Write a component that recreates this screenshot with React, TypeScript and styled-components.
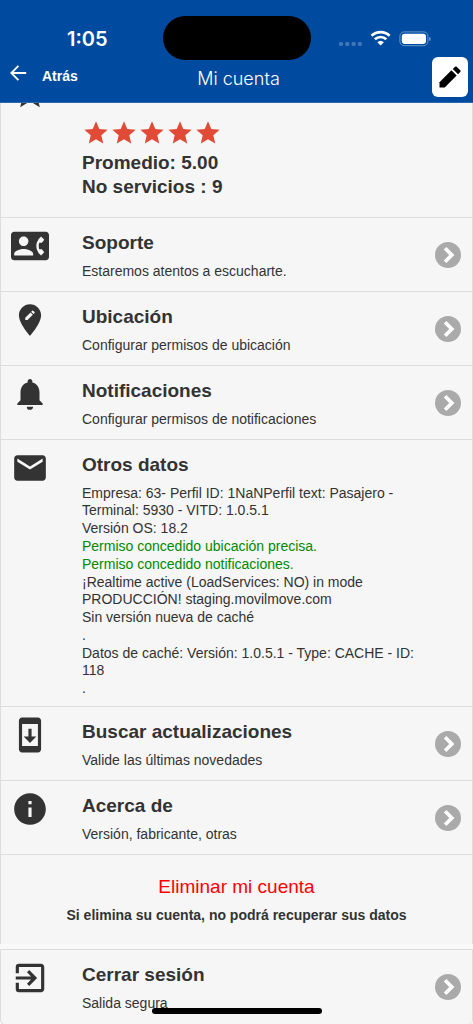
import React from "react";
import styled, { createGlobalStyle } from "styled-components";
import type { IconType } from "react-icons";
import {
  MdContactPhone,
  MdEditLocation,
  MdEmail,
  MdExitToApp,
  MdInfo,
  MdNotifications,
  MdStar,
  MdSystemUpdate,
} from "react-icons/md";

const GlobalStyle = createGlobalStyle`
  * { box-sizing: border-box; }
  body {
    margin: 0;
    background: #f9f9f9;
    color: #333;
    font-family: "Liberation Sans", Arial, sans-serif;
    font-size: 14px;
    line-height: 17px;
  }
  h1, h2, p { margin: 0; }
  button { font-family: inherit; border: 0; cursor: pointer; }
`;

const Header = styled.header`
  position: sticky;
  top: 0;
  z-index: 2;
  background: #004b9f;
  color: #fff;
  border-bottom: 1px solid #2a68ae;
`;

const StatusBar = styled.div`
  position: relative;
  display: flex;
  justify-content: space-between;
  align-items: center;
  height: 57px;
  padding: 20px 42px 0 67px;
`;

const Clock = styled.time`
  font-family: Inter, sans-serif;
  font-size: 20px;
  font-weight: 600;
  line-height: 24px;
`;

const Island = styled.div`
  position: absolute;
  top: 16px;
  left: 50%;
  width: 148px;
  height: 44px;
  border-radius: 22px;
  background: #000;
  transform: translateX(-50%);
`;

const Toolbar = styled.div`
  display: grid;
  grid-template-columns: 1fr auto 1fr;
  align-items: start;
  height: 45px;
  padding: 0 5px 0 9px;
`;

const BackButton = styled.button`
  display: flex;
  align-items: center;
  justify-self: start;
  gap: 15px;
  padding: 7px 0 0;
  background: none;
  color: #fff;
  font-size: 14px;
  font-weight: 700;
  line-height: 24px;
  svg { margin-bottom: 6px; }
`;

const PageTitle = styled.h1`
  padding-top: 10px;
  font-family: Inter, "Liberation Sans", sans-serif;
  font-size: 18px;
  font-weight: 300;
  line-height: 24px;
`;

const EditButton = styled.button`
  display: flex;
  align-items: center;
  justify-content: center;
  justify-self: end;
  width: 36px;
  height: 40px;
  padding: 0;
  border-radius: 6px;
  background: #fff;
  color: #000;
`;

const Panel = styled.section<{ $last?: boolean }>`
  border: 1px solid #ddd;
  border-bottom-width: ${(p) => (p.$last ? "1px" : "0")};
  border-radius: ${(p) => (p.$last ? "0 0 5px 5px" : "0")};
  background: #f6f6f6;
`;

const Main = styled.main`
  display: flex;
  flex-direction: column;
  gap: 5px;
  margin-top: -39px;
`;

const Row = styled.div`
  display: flex;
  align-items: flex-start;
  min-height: 74px;
  padding: 9px 11px 9px 10px;
  color: inherit;
  text-decoration: none;
  & + & { border-top: 1px solid #ddd; }
`;

const IconCell = styled.span`
  display: flex;
  flex: 0 0 38px;
  margin-right: 33px;
`;

const Body = styled.div`
  flex: 1;
  min-width: 0;
  padding: 4px 34px 0 0;
`;

const RowTitle = styled.h2`
  margin-bottom: 8px;
  font-size: 19px;
  font-weight: 700;
  line-height: 24px;
`;

const Chevron = styled.svg`
  flex: none;
  align-self: center;
  width: 26px;
  height: 26px;
`;

const Details = styled.div`
  display: flex;
  flex-direction: column;
  gap: 1px;
`;

const Granted = styled.p`
  color: #008a00;
`;

const Rating = styled.div`
  flex: 1;
  padding: 45px 0 9px;
  font-size: 19px;
  font-weight: 700;
  line-height: 24px;
`;

const Stars = styled.div`
  display: flex;
  margin-bottom: 4px;
  color: #e04a36;
`;

const DeleteBlock = styled.div`
  display: flex;
  flex-direction: column;
  align-items: center;
  gap: 8px;
  padding: 20px 10px;
  border-top: 1px solid #ddd;
  text-align: center;
`;

const DeleteButton = styled.button`
  padding: 0;
  background: none;
  color: #f00;
  font-size: 19px;
  line-height: 24px;
`;

const Warning = styled.p`
  font-weight: 700;
`;

const HomeIndicator = styled.div`
  position: fixed;
  z-index: 3;
  bottom: 10px;
  left: 50%;
  width: 170px;
  height: 6px;
  border-radius: 3px;
  background: #000;
  transform: translateX(-50%);
`;

function StatusIcons() {
  return (
    <svg width="92" height="18" viewBox="0 0 92 18" aria-hidden="true">
      <g fill="#3f77b8">
        <rect x="0" y="12" width="4" height="4" rx="1.4" />
        <rect x="6.3" y="12" width="4" height="4" rx="1.4" />
        <rect x="12.6" y="12" width="4" height="4" rx="1.4" />
        <rect x="18.9" y="12" width="4" height="4" rx="1.4" />
      </g>
      <g fill="none" stroke="#fff" strokeWidth="2.7">
        <path d="M32.6 5.8a13 13 0 0 1 18 0" />
        <path d="M35.9 9.3a8.2 8.2 0 0 1 11.4 0" />
      </g>
      <path d="M38.3 12.2a4.8 4.8 0 0 1 6.6 0l-3.3 3.3z" fill="#fff" />
      <rect x="60.9" y="1.9" width="28" height="13.8" rx="4.3" fill="none" stroke="#6b98ca" />
      <rect x="62.8" y="3.7" width="24.2" height="10.2" rx="2.8" fill="#fff" />
      <path d="M90.1 6.7a2.3 2.3 0 0 1 0 4.4z" fill="#6b98ca" />
    </svg>
  );
}

function BackArrow() {
  return (
    <svg width="18" height="18" viewBox="0 0 18 18" fill="none" stroke="#fff" strokeWidth="1.8" aria-hidden="true">
      <path d="M9.4 1.8 2.3 9l7.1 7.2M2.3 9h14.9" />
    </svg>
  );
}

function PencilIcon() {
  return (
    <svg width="28" height="28" viewBox="0 0 24 24" fill="currentColor" aria-hidden="true">
      <path d="M3 16.5V21h4.5L17.7 10.8l-4.5-4.5z" />
      <path d="M20.8 7.7c.4-.4.4-1 0-1.4l-3.1-3.1c-.4-.4-1-.4-1.4 0l-1.9 1.9 4.5 4.5z" />
    </svg>
  );
}

function ChevronIcon() {
  return (
    <Chevron viewBox="0 0 26 26" aria-hidden="true">
      <circle cx="13" cy="13" r="13" fill="#aaa" />
      <path d="m10.1 6.3 6.7 6.7-6.7 6.7" fill="none" stroke="#fff" strokeWidth="3.7" />
    </Chevron>
  );
}

interface MenuRowProps {
  icon: IconType;
  title: string;
  text: string;
  href: string;
}

function MenuRow({ icon: Icon, title, text, href }: MenuRowProps) {
  return (
    <Row as="a" href={href}>
      <IconCell>
        <Icon size={38} />
      </IconCell>
      <Body>
        <RowTitle>{title}</RowTitle>
        <p>{text}</p>
      </Body>
      <ChevronIcon />
    </Row>
  );
}

export default function App() {
  return (
    <>
      <GlobalStyle />
      <Header>
        <StatusBar>
          <Clock>1:05</Clock>
          <Island />
          <StatusIcons />
        </StatusBar>
        <Toolbar>
          <BackButton type="button">
            <BackArrow />
            Atrás
          </BackButton>
          <PageTitle>Mi cuenta</PageTitle>
          <EditButton type="button" aria-label="Editar">
            <PencilIcon />
          </EditButton>
        </Toolbar>
      </Header>
      <Main>
        <Panel>
          <Row>
            <IconCell>
              <MdStar size={38} />
            </IconCell>
            <Rating>
              <Stars role="img" aria-label="5 estrellas">
                {[1, 2, 3, 4, 5].map((n) => (
                  <MdStar key={n} size={28} />
                ))}
              </Stars>
              <p>Promedio: 5.00</p>
              <p>No servicios : 9</p>
            </Rating>
          </Row>
          <MenuRow icon={MdContactPhone} title="Soporte" text="Estaremos atentos a escucharte." href="#soporte" />
          <MenuRow icon={MdEditLocation} title="Ubicación" text="Configurar permisos de ubicación" href="#ubicacion" />
          <MenuRow
            icon={MdNotifications}
            title="Notificaciones"
            text="Configurar permisos de notificaciones"
            href="#notificaciones"
          />
          <Row>
            <IconCell>
              <MdEmail size={38} />
            </IconCell>
            <Body>
              <RowTitle>Otros datos</RowTitle>
              <Details>
                <p>Empresa: 63- Perfil ID: 1NaNPerfil text: Pasajero - Terminal: 5930 - VITD: 1.0.5.1</p>
                <p>Versión OS: 18.2</p>
                <Granted>Permiso concedido ubicación precisa.</Granted>
                <Granted>Permiso concedido notificaciones.</Granted>
                <p>¡Realtime active (LoadServices: NO) in mode PRODUCCIÓN! staging.movilmove.com</p>
                <p>Sin versión nueva de caché</p>
                <p>.</p>
                <p>Datos de caché: Versión: 1.0.5.1 - Type: CACHE - ID: 118</p>
                <p>.</p>
              </Details>
            </Body>
          </Row>
          <MenuRow
            icon={MdSystemUpdate}
            title="Buscar actualizaciones"
            text="Valide las últimas novedades"
            href="#actualizaciones"
          />
          <MenuRow icon={MdInfo} title="Acerca de" text="Versión, fabricante, otras" href="#acerca" />
          <DeleteBlock>
            <DeleteButton type="button">Eliminar mi cuenta</DeleteButton>
            <Warning>Si elimina su cuenta, no podrá recuperar sus datos</Warning>
          </DeleteBlock>
        </Panel>
        <Panel $last>
          <MenuRow icon={MdExitToApp} title="Cerrar sesión" text="Salida segura" href="#salir" />
        </Panel>
      </Main>
      <HomeIndicator />
    </>
  );
}
